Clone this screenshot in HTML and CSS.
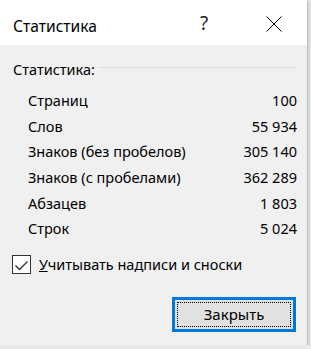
FILE: index.html
```html
<!DOCTYPE html>
<html>
<head>
    <title>Статистика</title>
    <link rel="stylesheet" href="styles.css">
</head>
<body>
    <div class="dialog">
        <div class="titlebar">
            <span class="title">Статистика</span>
            <span class="help">?</span>
            <span class="close">
                <svg width="16" height="16" viewBox="0 0 16 16">
                    <path d="M0.5 0.5 L15.5 15.5 M15.5 0.5 L0.5 15.5" stroke="#000" stroke-width="1" fill="none"/>
                </svg>
            </span>
        </div>
        <div class="dialog-body">
            <div class="group-head">
                <span>Статистика:</span>
                <span class="rule"></span>
            </div>
            <div class="stats">
                <div class="row"><span>Страниц</span><span>100</span></div>
                <div class="row"><span>Слов</span><span>55 934</span></div>
                <div class="row"><span>Знаков (без пробелов)</span><span>305 140</span></div>
                <div class="row"><span>Знаков (с пробелами)</span><span>362 289</span></div>
                <div class="row"><span>Абзацев</span><span>1 803</span></div>
                <div class="row"><span>Строк</span><span>5 024</span></div>
            </div>
            <label class="check">
                <span class="box">
                    <svg width="17" height="17" viewBox="0 0 17 17">
                        <polyline points="2.5,9.5 6.5,13.5 14.5,5.5" stroke="#333" stroke-width="1.4" fill="none"/>
                    </svg>
                </span>
                <span><span class="key">У</span>читывать надписи и сноски</span>
            </label>
            <div class="actions">
                <button type="button" class="btn"><span class="focus">Закрыть</span></button>
            </div>
        </div>
    </div>
</body>
</html>
```

FILE: styles.css
```css
body {
    margin: 0;
    background-color: #e9e9e9;
    font-family: 'Noto Sans', 'Open Sans', sans-serif;
    color: #000000;
}

.dialog {
    width: 307px;
    height: 345px;
    background-color: #f0f0f0;
    box-shadow: 1px 1px 3px rgba(0, 0, 0, 0.25);
}

.titlebar {
    height: 45px;
    background-color: #ffffff;
    display: flex;
    align-items: flex-start;
    padding-left: 13px;
    box-sizing: border-box;
}

.title {
    width: 187px;
    margin-top: 16px;
    font-size: 15.6px;
    line-height: 20px;
}

.help {
    width: 66px;
    margin-top: 13px;
    font-size: 19px;
    line-height: 20px;
    color: #222222;
}

.close {
    margin-top: 16px;
    height: 16px;
}

.close svg {
    display: block;
}

.dialog-body {
    padding: 15px 10px 0 13px;
    font-size: 14.5px;
}

.group-head {
    display: flex;
    line-height: 19px;
}

.rule {
    flex: 1;
    height: 1px;
    margin: 7px 0 0 4px;
    background-color: #dcdcdc;
}

.stats {
    margin-top: 9px;
    padding-left: 15px;
}

.row {
    display: flex;
    justify-content: space-between;
    height: 25.66px;
    line-height: 25.66px;
}

.check {
    display: flex;
    align-items: center;
    margin: 13px 0 0 -1px;
    line-height: 19px;
}

.box {
    width: 17px;
    height: 17px;
    border: 1px solid #333333;
    background-color: #ffffff;
    margin-right: 8px;
}

.box svg {
    display: block;
}

.key {
    text-decoration: underline;
}

.actions {
    display: flex;
    justify-content: flex-end;
    margin-top: 23px;
    margin-right: 1px;
}

.btn {
    width: 124px;
    height: 35px;
    padding: 2px;
    border: 3px solid #0078d7;
    background-color: #e1e1e1;
    font-family: inherit;
    font-size: 15px;
    color: #000000;
    box-sizing: border-box;
}

.focus {
    display: flex;
    align-items: center;
    justify-content: center;
    height: 100%;
    border: 1px dotted #000000;
    box-sizing: border-box;
}
```
